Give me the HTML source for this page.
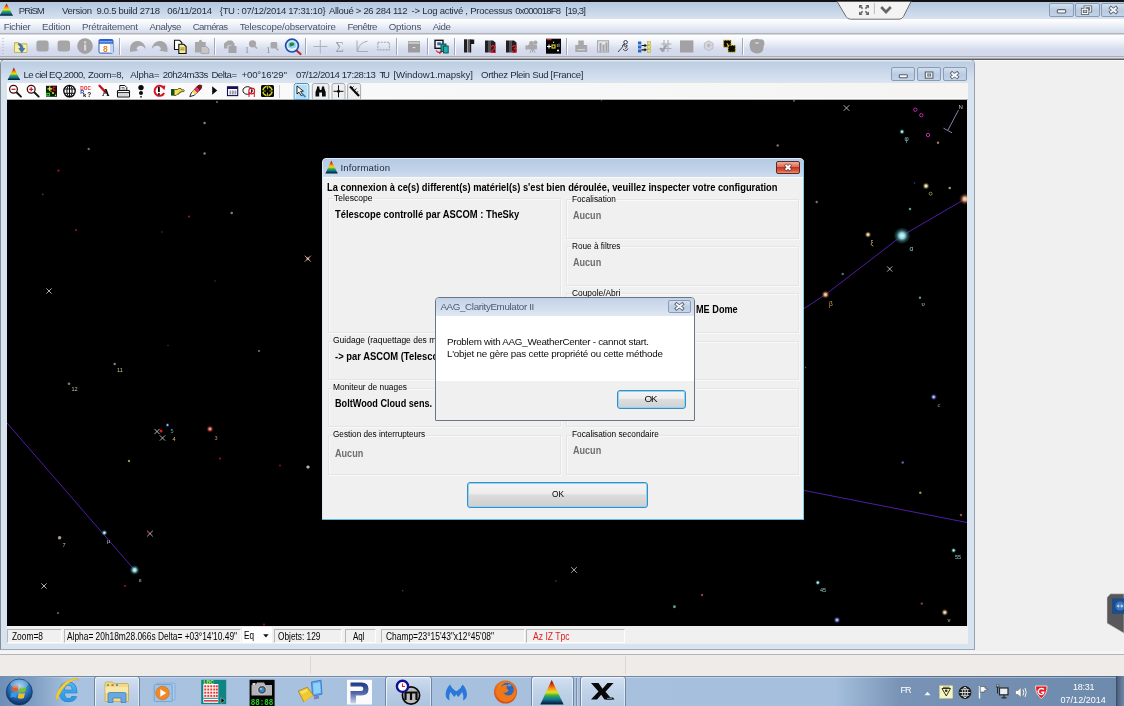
<!DOCTYPE html>
<html><head><meta charset="utf-8"><title>PRiSM</title>
<style>
*{box-sizing:border-box;margin:0;padding:0}
html,body{width:1124px;height:706px;overflow:hidden;background:#f0f0f0;font-family:"Liberation Sans",sans-serif;}
.a{position:absolute}
.t{position:absolute;white-space:pre;line-height:1;font-family:"Liberation Sans",sans-serif;}
svg{position:absolute;overflow:visible;filter:blur(.3px)}
.t{filter:blur(.3px)}
.grp{position:absolute;border:1px solid #e5e5e5;box-shadow:inset 1px 1px 0 #f9f9f9,1px 1px 0 #f9f9f9;z-index:19}
.wb{position:absolute;border:1px solid #8a9bb4;border-radius:2px;background:linear-gradient(#d3dfee,#b9cbe2 55%,#c3d3e7)}
.pan{position:absolute;top:629px;height:14px;border:1px solid #b8b8b8;border-right-color:#fdfdfd;border-bottom-color:#fdfdfd;background:#f0f0f0}
</style></head><body>
<!-- ===== main frame ===== -->
<div class="a" style="left:0;top:0;width:1124px;height:2px;background:#101010"></div>
<div class="a" style="left:0;top:2px;width:1124px;height:17px;background:linear-gradient(#b4c8e1,#c4d4e8 50%,#d8e2ef)"></div>
<div class="a" style="left:0;top:19px;width:1124px;height:14px;background:linear-gradient(#ffffff,#f4f6fb 30%,#d4dcec)"></div>
<div class="a" style="left:0;top:33px;width:1124px;height:1px;background:#b0b4bc"></div>
<div class="a" style="left:0;top:34px;width:1124px;height:1px;background:#d8d8dc"></div>
<div class="a" style="left:0;top:35px;width:1124px;height:21px;background:linear-gradient(#ffffff,#f0f3f9 30%,#d6dcee 68%,#d3d9ec)"></div>
<div class="a" style="left:0;top:56px;width:1124px;height:1px;background:#acaeb6"></div>
<div class="a" style="left:0;top:57px;width:1124px;height:1px;background:#d8d8dc"></div>
<div class="a" style="left:0;top:58px;width:1124px;height:1px;background:#a4a4aa"></div>
<div class="a" style="left:0;top:59px;width:1124px;height:1px;background:#5e5e66"></div>
<div class="a" style="left:0;top:60px;width:1124px;height:1px;background:#fafafa"></div>
<!-- title icon -->
<svg style="left:0;top:2px" width="18" height="17" viewBox="0 0 18 17"><path d="M6.600 1.400 L13 13.800 L-0.500 13.800 Z" fill="url(#rb)"/></svg>
<!-- teamviewer tab -->
<svg style="left:835px;top:0" width="80" height="21" viewBox="0 0 80 21"><path d="M1.8 1 L76.3 1 L68.5 16.5 Q67 19.2 64 19.2 L15.5 19.2 Q12.5 19.2 11 16.5 Z" fill="#f3f3f3" stroke="#6c6c6c" stroke-width="1"/>
<path d="M0 0H80V1.6H0Z" fill="#101010"/>
<g stroke="#666" stroke-width="1.5" fill="none"><path d="M24.6 5.6 L27.6 8.6 M33.4 5.6 L30.4 8.6 M24.6 14.4 L27.6 11.4 M33.4 14.4 L30.4 11.4"/></g>
<g fill="#666"><path d="M24 5h3.6l-3.6 3.6z M34 5v3.6l-3.6-3.6z M24 15v-3.6l3.6 3.6z M34 15h-3.6l3.600-3.600z"/></g>
<path d="M39.4 3 V14" stroke="#bdbdbd" stroke-width="1"/>
<path d="M46.2 7 L51 12 L55.800 7" fill="none" stroke="#666" stroke-width="2.600" stroke-linejoin="miter"/></svg>
<!-- window buttons -->
<div class="wb" style="left:1049px;top:3px;width:25px;height:14px"></div>
<div class="wb" style="left:1075px;top:3px;width:25px;height:14px"></div>
<div class="wb" style="left:1101px;top:3px;width:25px;height:14px"></div>
<svg style="left:1049px;top:3px" width="75" height="14" viewBox="0 0 75 14">
<rect x="8.300" y="6.600" width="8.400" height="3.400" rx="1" fill="#f8f9fb" stroke="#58626f" stroke-width="1.100"/>
<g fill="none" stroke="#58626f" stroke-width="2.800"><path d="M36 7.500V3.800H41.700V8.200H39.500"/><rect x="33.300" y="6.300" width="5.400" height="4.200"/></g>
<g fill="none" stroke="#f8f9fb" stroke-width="1.100"><path d="M36 7.500V3.800H41.700V8.200H39.500"/><rect x="33.300" y="6.300" width="5.400" height="4.200"/></g>
<path d="M60.600 3.800 L68.200 10.200 M68.200 3.800 L60.600 10.200" stroke="#58626f" stroke-width="3.600" stroke-linecap="butt"/><path d="M61.300 4.400 L67.500 9.600 M67.500 4.400 L61.300 9.600" stroke="#f8f9fb" stroke-width="2" stroke-linecap="butt"/>
</svg>
<!-- toolbar -->
<svg style="left:0;top:35px" width="800" height="22" viewBox="0 35 800 22">
<g fill="#aab0c0"><rect x="2.500" y="38" width="1" height="1"/><rect x="2.500" y="41" width="1" height="1"/><rect x="2.500" y="44" width="1" height="1"/><rect x="2.500" y="47" width="1" height="1"/><rect x="2.500" y="50" width="1" height="1"/><rect x="2.500" y="53" width="1" height="1"/></g>
<g stroke="#a2a8b8" stroke-width="1"><path d="M119.500 38V55M214.500 38V55M305.500 38V55M396.500 38V55M427.500 38V55M454.500 38V55M566.500 38V55M742.500 38V55"/></g>
<g stroke="#fafbfd" stroke-width="1"><path d="M120.500 38V55M215.500 38V55M306.500 38V55M397.500 38V55M428.500 38V55M455.500 38V55M567.500 38V55M743.500 38V55"/></g>
<!-- folder -->
<path d="M14.500 42.500h4l1 1.300h7.300v8.700h-12.300z" fill="#f0e080" stroke="#b8a850" stroke-width=".8"/><path d="M15 45h11.500v7h-11.500z" fill="#f8f0a0"/><path d="M18.500 43.500 q4.500 .5 4.500 5 l1.800 0 l-3 4 l-3-4 l1.800 0 q0-2.500-2.100-3.500z" fill="#3a78c8" stroke="#24508c" stroke-width=".5"/>
<!-- grey squares -->
<rect x="36.400" y="40.400" width="12.200" height="11" rx="2.600" fill="#a6a6a8"/><rect x="57.600" y="40.400" width="12.400" height="11" rx="2.600" fill="#a6a6a8"/>
<!-- info -->
<circle cx="85" cy="46.100" r="7.800" fill="#a2a2a4"/><rect x="84" y="44.500" width="2.200" height="6" fill="#d8d8da"/><rect x="84" y="41.300" width="2.200" height="2" fill="#d8d8da"/>
<!-- calendar -->
<rect x="99" y="39.500" width="14" height="13.600" rx="1.200" fill="#fff" stroke="#2858c0" stroke-width="1"/><path d="M99 40.700q0-1.200 1.200-1.200h11.600q1.200 0 1.200 1.200v3h-14z" fill="#2a60d0"/><path d="M99.500 41h13v1.400h-13z" fill="#7aa8f0"/><path d="M110 44h3v9h-3z" fill="#c8d4f0"/><text x="103" y="52" font-family="Liberation Sans" font-weight="700" font-size="8.500" fill="#f08020">8</text>
<!-- undo / redo -->
<path d="M130.200 52 q-1.200-6.500 2.800-9.500 q4-2.600 8.500-.5 q3.500 2 4.300 7 q-2.500-3.300-5.300-3.300 q-3 0-4 3 l1.500 2 z" fill="#a6a6a8"/>
<path d="M167.300 52 q1.200-6.500-2.800-9.500 q-4-2.600-8.500-.5 q-3.500 2-4.300 7 q2.500-3.300 5.300-3.300 q3 0 4 3 l-1.500 2 z" fill="#a6a6a8"/>
<!-- copy -->
<path d="M174.500 40.300h5l2.300 2.300v6.900h-7.300z" fill="#fff" stroke="#111" stroke-width="1.100"/><path d="M178.800 44.300h5l2.300 2.300v6.900h-7.300z" fill="#f4ec90" stroke="#111" stroke-width="1.100"/><path d="M180.300 48h4.200M180.300 49.800h4.200" stroke="#806000" stroke-width=".8"/>
<!-- paste grey -->
<path d="M195 42h3.500q1-2.300 2-2.300t2 2.300h3.200v10.500h-10.700z" fill="#a8a8aa"/><path d="M201 46.500h5.500l2.300 2.300v4.700h-7.800z" fill="#c6c6c8" stroke="#a0a0a2" stroke-width=".8"/>
<!-- grey shapes -->
<path d="M224 43.500l4-3h4l2.500 3v5h-3v-3h-4v3h-3.500z" fill="#a8a8aa"/><rect x="228.500" y="46" width="8" height="7" fill="#a4a4a6"/>
<text x="244.800" y="52.500" font-family="Liberation Serif" font-size="9" fill="#8e8e90">1</text><circle cx="252.500" cy="43.800" r="3.600" fill="#a8a8aa"/><path d="M254.500 46l2.500 2.500" stroke="#a8a8aa" stroke-width="1.600"/>
<text x="266" y="53.300" font-family="Liberation Serif" font-size="9" fill="#8e8e90">1</text><rect x="270.500" y="42" width="6.800" height="6.500" rx="1.500" fill="#a8a8aa"/><path d="M276 48l2.200 2.200" stroke="#a8a8aa" stroke-width="1.600"/>
<!-- globe magnifier -->
<path d="M296.500 50.500l4 3.500" stroke="#c02828" stroke-width="2.200" stroke-linecap="round"/><circle cx="292" cy="45.600" r="6.400" fill="#d8ecfa" stroke="#1c50b0" stroke-width="1.700"/><circle cx="292" cy="45.600" r="4" fill="#9cd0f0"/><path d="M289.500 43.500q2.500-2 5 .2q-.5 2.500-2.800 2.300q-1.200 1.500-2.200-.5z" fill="#208838"/><path d="M288 48.500q4 2 8-.5" stroke="#fff" stroke-width="1" fill="none"/>
<!-- plus sigma curve rect -->
<path d="M313.500 46.500h14M320.300 40v13.500" stroke="#b0b2b8" stroke-width="1"/>
<text x="335.300" y="51.600" font-family="Liberation Serif" font-size="15" fill="#a2a4aa">Σ</text>
<path d="M357 40.500V51.500H368" stroke="#a8aab0" stroke-width="1" fill="none"/><path d="M357.500 51q1.500-8.500 10-9.800" stroke="#a8aab0" stroke-width="1" fill="none"/>
<rect x="377.800" y="42.300" width="11.600" height="7.600" fill="none" stroke="#a4a6ac" stroke-width="1.100" stroke-dasharray="2 1"/>
<!-- grey box -->
<rect x="408" y="41.200" width="12" height="11.300" fill="#9c9c9e"/><rect x="408.500" y="42" width="11" height="2" fill="#c8c8ca"/><rect x="412.600" y="47" width="2.800" height="1.200" fill="#dcdcdc"/>
<!-- colored icon -->
<rect x="435" y="40.300" width="8" height="8" fill="#f0f0f0" stroke="#111" stroke-width="1.400"/><rect x="437.300" y="42.300" width="3.500" height="3" fill="#3060c0"/><path d="M436 50.500q1.500 2.500 5 2l-1-1.500m1 1.500l-1.800 1" stroke="#e02020" stroke-width="1.100" fill="none"/><rect x="441" y="44" width="5" height="7.500" fill="#18a0a0" stroke="#0a4848" stroke-width=".9"/><rect x="443.600" y="46" width="4.600" height="7" fill="#20b0b0" stroke="#0a4848" stroke-width=".9"/>
<!-- cameras -->
<rect x="464" y="39.300" width="3" height="13.200" fill="#202020"/><rect x="467.500" y="39.300" width="2.600" height="13.200" fill="#606060"/><rect x="470" y="39.300" width="1.200" height="13.200" fill="#181818"/><path d="M471 39.500h3.200v4.500h-3.200z" fill="#181818"/>
<rect x="485" y="40.500" width="3" height="12" fill="#202020"/><rect x="488" y="40.500" width="2.600" height="12" fill="#505058"/><path d="M490.500 40.500h2.500l2.500 2v10h-5z" fill="#202020"/><text x="490.300" y="53.200" font-family="Liberation Sans" font-weight="700" font-size="10.500" fill="#e81828">2</text>
<rect x="506" y="40.500" width="3" height="12" fill="#202020"/><rect x="509" y="40.500" width="2.600" height="12" fill="#505058"/><path d="M511.500 40.500h2.500l2.500 2v10h-5z" fill="#202020"/><text x="511.600" y="53.200" font-family="Liberation Sans" font-weight="700" font-size="10.500" fill="#e81828">3</text>
<!-- movie cam grey -->
<circle cx="531.500" cy="43.500" r="2.400" fill="#a8a8aa"/><circle cx="535.500" cy="42.600" r="2" fill="#a8a8aa"/><path d="M528.500 45h8v4h-8zM526 45.500l2.500 1v2l-2.500 1zM532 49l-2.300 4M533 49l2.300 4M532.500 49v3.500" fill="#a8a8aa" stroke="#a8a8aa" stroke-width="1"/>
<!-- sky icon -->
<rect x="546" y="38.700" width="15" height="15" fill="#050505"/><rect x="546.500" y="39" width="5" height="1.300" fill="#e02020"/><path d="M547 46.500h4M549 44.500v4" stroke="#fff" stroke-width="1.100"/><rect x="552" y="45" width="3" height="3" fill="none" stroke="#e8e020" stroke-width="1.100"/><circle cx="558" cy="50.500" r="1" fill="#fff"/><circle cx="553.500" cy="42.300" r=".7" fill="#d0d0ff"/><path d="M557.300 44v3M559 43.500v3.500" stroke="#ccc" stroke-width=".7"/>
<!-- grey save -->
<path d="M575.300 45h3v-4.500h5.500v4.500h3.400v7h-11.900z" fill="#a8a8aa"/><rect x="577.500" y="49" width="7.500" height="1.200" fill="#d0d0d2"/>
<!-- bar chart -->
<rect x="597.600" y="40.800" width="11" height="11.200" fill="#e4e6ec" stroke="#a0a0a4" stroke-width="1"/><rect x="599.500" y="43" width="2" height="8.500" fill="#a0a0a4"/><rect x="602.500" y="44.500" width="2" height="7" fill="#a0a0a4"/><rect x="605.500" y="42.500" width="2" height="9" fill="#a0a0a4"/>
<!-- wrench person -->
<circle cx="625.600" cy="42.300" r="1.800" fill="none" stroke="#30343c" stroke-width="1"/><path d="M618 52l4.500-5q-.5-2.500 2-3.200l-.6 2l1.600 .6l1.500-1.300q.6 2.800-2 3.500" fill="none" stroke="#30343c" stroke-width=".9"/><path d="M623 49q3 3.500 5-.5" fill="none" stroke="#30343c" stroke-width=".9"/>
<!-- blue/yellow squares -->
<g fill="#2468c8"><rect x="638" y="41.500" width="3.300" height="3"/><rect x="638" y="45.500" width="3.300" height="3"/><rect x="638" y="49.500" width="3.300" height="3"/></g><g fill="#e8e068" stroke="#a0a030" stroke-width=".5"><rect x="647.500" y="41.500" width="3.200" height="3"/><rect x="647.500" y="45.500" width="3.200" height="3"/><rect x="647.500" y="49.500" width="3.200" height="3"/></g><path d="M641.500 45.500h4M641.500 49.800h4" stroke="#111" stroke-width="1.200"/><path d="M644.500 43.800l2.500 1.700l-2.500 1.700zM644.500 48.100l2.500 1.700l-2.500 1.700z" fill="#111"/>
<!-- grey hash -->
<path d="M664 40v12M668 40v12M661 44h10.500M661 48.500h10.500" stroke="#aeaeb2" stroke-width="1.100"/><path d="M660 48l2.500 3l4-6" stroke="#9c9ca0" stroke-width="1.800" fill="none"/>
<!-- grey square -->
<rect x="680" y="40.400" width="13.400" height="12.100" fill="#a2a2a4"/>
<!-- light cube -->
<path d="M708.700 40.800l4.300 2.400v5l-4.300 2.500l-4.300-2.500v-5z" fill="#d4d6dc" stroke="#b4b6bc" stroke-width=".8"/><circle cx="708.700" cy="45.600" r="1.800" fill="#b8bac0"/>
<!-- black/yellow -->
<rect x="723.600" y="40.200" width="7.400" height="7" fill="#0a0a0a" stroke="#d8b820" stroke-width="1" stroke-dasharray="1.500 1"/><rect x="728" y="45.200" width="7.400" height="7" fill="#0a0a0a" stroke="#e8d020" stroke-width="1" stroke-dasharray="1.500 1"/><path d="M727 43l1.500 4" stroke="#d8b820" stroke-width="1"/>
<!-- grey head -->
<path d="M750 42q1-3 4-2.600q3-1.500 6 0q3-.600 4 1.600q1 3-.5 5.500q.5 4-2.500 6q-3 1.500-6.500 .5q-4-1-4.500-5q-1-3 0-6z" fill="#a2a2a4"/><ellipse cx="757" cy="43" rx="2" ry="1" fill="#d0d0d2"/>
</svg>

<!-- ===== MDI child ===== -->
<div class="a" style="left:0;top:59px;width:975px;height:591px;background:#d8e3f0;border:1px solid #858d98;border-top-color:#5e5e66;border-bottom-color:#a2aab4;border-right-color:#98a0ac;border-radius:5px 5px 0 0"></div>
<div class="a" style="left:1px;top:60px;width:973px;height:23px;border-radius:4px 4px 0 0;background:linear-gradient(#dce7f1 0,#dce7f1 1px,#bccee3 2px,#cbd9ea 55%,#dbe5f0)"></div>
<div class="a" style="left:7px;top:83px;width:961px;height:16px;background:linear-gradient(90deg,#fcfcfc,#f8f8f8 40%,#f5f4f3)"></div>
<div class="a" style="left:7px;top:98px;width:961px;height:1px;background:#fdfdfd"></div><div class="a" style="left:7px;top:99px;width:961px;height:1px;background:#b0b0b0"></div>
<div class="a" style="left:7px;top:100px;width:960px;height:526px;background:#000;overflow:hidden">
<svg style="left:-7px;top:-100px" width="1124" height="706" viewBox="0 0 1124 706"><defs>
<radialGradient id="gc"><stop offset="0" stop-color="#d8ffff"/><stop offset=".35" stop-color="#8fd0d8"/><stop offset=".7" stop-color="#3a8088" stop-opacity=".45"/><stop offset="1" stop-color="#3a8088" stop-opacity="0"/></radialGradient>
<radialGradient id="go"><stop offset="0" stop-color="#ffe8d0"/><stop offset=".35" stop-color="#e0a078"/><stop offset=".7" stop-color="#805038" stop-opacity=".45"/><stop offset="1" stop-color="#805038" stop-opacity="0"/></radialGradient>
<radialGradient id="gy"><stop offset="0" stop-color="#fff4d8"/><stop offset=".35" stop-color="#d8b888"/><stop offset=".7" stop-color="#806848" stop-opacity=".45"/><stop offset="1" stop-color="#806848" stop-opacity="0"/></radialGradient>
<radialGradient id="gw"><stop offset="0" stop-color="#ffffe8"/><stop offset=".35" stop-color="#d8d0a0"/><stop offset=".7" stop-color="#807850" stop-opacity=".45"/><stop offset="1" stop-color="#807850" stop-opacity="0"/></radialGradient>
<radialGradient id="gr"><stop offset="0" stop-color="#ffd0c8"/><stop offset=".35" stop-color="#d06050"/><stop offset=".7" stop-color="#802820" stop-opacity=".45"/><stop offset="1" stop-color="#802820" stop-opacity="0"/></radialGradient>
<radialGradient id="gb"><stop offset="0" stop-color="#e0e8ff"/><stop offset=".35" stop-color="#8090d8"/><stop offset=".7" stop-color="#384088" stop-opacity=".45"/><stop offset="1" stop-color="#384088" stop-opacity="0"/></radialGradient>
</defs>
<g stroke="#5c1fb8" stroke-width=".9" fill="none"><path d="M7 423 L134.600 570"/><path d="M965 199 L902 235.700 L825.500 294.600 L804 308.500"/><path d="M804 490.400 L967 522.500"/></g>
<g stroke="#a4a4d4" stroke-width=".8" fill="none"><path d="M958.500 110 L948 130"/><path d="M943.500 128.200 L952 132.800"/></g>
<g stroke="#c42cbc" stroke-width=".95" fill="none"><circle cx="915.300" cy="109.700" r="1.700"/><circle cx="921.300" cy="115.200" r="1.700"/><circle cx="928" cy="135" r="1.700"/></g>
<circle cx="902" cy="235.7" r="8.5" fill="url(#gc)"/>
<circle cx="965" cy="199" r="6" fill="url(#go)"/>
<circle cx="825.5" cy="294.6" r="4.2" fill="url(#go)"/>
<circle cx="868" cy="234.6" r="3.4" fill="url(#gy)"/>
<circle cx="926" cy="186" r="3.6" fill="url(#gw)"/>
<circle cx="902" cy="131.7" r="2.8" fill="url(#gc)"/>
<circle cx="134.6" cy="570" r="5" fill="url(#gc)"/>
<circle cx="104.4" cy="532.8" r="3" fill="url(#gc)"/>
<circle cx="210" cy="429" r="3.8" fill="url(#gr)"/>
<circle cx="167.5" cy="425" r="2.2" fill="url(#gb)"/>
<circle cx="933.7" cy="397" r="3.4" fill="url(#gb)"/>
<circle cx="837" cy="620" r="3.6" fill="url(#gb)"/>
<circle cx="944.8" cy="612.4" r="3.6" fill="url(#gy)"/>
<circle cx="953.6" cy="550.4" r="2.6" fill="url(#gc)"/>
<circle cx="817.8" cy="582.6" r="2.6" fill="url(#gc)"/>
<circle cx="307.8" cy="258.7" r="2.5" fill="url(#gr)"/>
<circle cx="217" cy="102" r="0.96" fill="#888" opacity=".85"/>
<circle cx="204.6" cy="123" r="1.2" fill="#999" opacity=".85"/>
<circle cx="204.6" cy="153.5" r="1.2" fill="#999" opacity=".85"/>
<circle cx="88.7" cy="149" r="1.2" fill="#a07078" opacity=".85"/>
<circle cx="58.5" cy="170.7" r="1.12" fill="#c01818" opacity=".85"/>
<circle cx="42.8" cy="194.4" r="0.8" fill="#555" opacity=".85"/>
<circle cx="189" cy="216.6" r="1.12" fill="#c01818" opacity=".85"/>
<circle cx="231.7" cy="213" r="1.28" fill="#a09090" opacity=".85"/>
<circle cx="76" cy="230" r="1.12" fill="#c01818" opacity=".85"/>
<circle cx="161.8" cy="232" r="0.8" fill="#444" opacity=".85"/>
<circle cx="215" cy="281" r="0.8" fill="#444" opacity=".85"/>
<circle cx="168" cy="345.5" r="0.8" fill="#444" opacity=".85"/>
<circle cx="259" cy="351" r="1.12" fill="#888" opacity=".85"/>
<circle cx="114.7" cy="364" r="1.2" fill="#999" opacity=".85"/>
<circle cx="69" cy="383.7" r="1.28" fill="#a09080" opacity=".85"/>
<circle cx="129" cy="461" r="1.2" fill="#b0a870" opacity=".85"/>
<circle cx="220" cy="458.6" r="1.04" fill="#c01818" opacity=".85"/>
<circle cx="280" cy="465.5" r="1.04" fill="#a01818" opacity=".85"/>
<circle cx="59.6" cy="537.8" r="1.76" fill="#d0b8a0" opacity=".85"/>
<circle cx="125" cy="586" r="1.04" fill="#c01818" opacity=".85"/>
<circle cx="58" cy="613" r="1.12" fill="#807868" opacity=".85"/>
<circle cx="264" cy="624.5" r="1.04" fill="#c01818" opacity=".85"/>
<circle cx="402.8" cy="590.7" r="0.8" fill="#555" opacity=".85"/>
<circle cx="555.8" cy="581" r="0.8" fill="#555" opacity=".85"/>
<circle cx="794" cy="100.7" r="1.04" fill="#777" opacity=".85"/>
<circle cx="938" cy="142.8" r="1.2" fill="#b09860" opacity=".85"/>
<circle cx="777.7" cy="145.5" r="1.2" fill="#a08868" opacity=".85"/>
<circle cx="949.7" cy="188" r="1.28" fill="#c0b070" opacity=".85"/>
<circle cx="914.6" cy="183" r="0.8" fill="#4050a0" opacity=".85"/>
<circle cx="816.7" cy="202" r="1.2" fill="#a08070" opacity=".85"/>
<circle cx="910" cy="209" r="1.28" fill="#70b0b0" opacity=".85"/>
<circle cx="842.7" cy="274" r="1.28" fill="#6080a0" opacity=".85"/>
<circle cx="920" cy="297.7" r="1.2" fill="#70b0b0" opacity=".85"/>
<circle cx="805.6" cy="367.6" r="0.8" fill="#665" opacity=".85"/>
<circle cx="902.7" cy="462.5" r="1.28" fill="#7868b0" opacity=".85"/>
<circle cx="920.3" cy="492.7" r="1.28" fill="#b8a860" opacity=".85"/>
<circle cx="961" cy="515" r="1.28" fill="#a06050" opacity=".85"/>
<circle cx="702" cy="595" r="1.2" fill="#a05048" opacity=".85"/>
<circle cx="674.4" cy="606.7" r="1.44" fill="#70b8b0" opacity=".85"/>
<circle cx="921.8" cy="603.6" r="1.2" fill="#a05048" opacity=".85"/>
<circle cx="601.5" cy="100.6" r="0.8" fill="#a02020" opacity=".85"/>
<g stroke="#d8d8d8" stroke-width=".8">
<path d="M46.4 288.4L51.6 293.6M51.6 288.4L46.4 293.6"/>
<path d="M154.4 428.9L159.6 434.1M159.6 428.9L154.4 434.1"/>
<path d="M159.9 435.4L165.1 440.6M165.1 435.4L159.9 440.6"/>
<path d="M147.2 530.8L152.8 536.4M152.8 530.8L147.2 536.4"/>
<path d="M41.4 583.4L46.6 588.6M46.6 583.4L41.4 588.6"/>
<path d="M843.7 105.2L849.3 110.8M849.3 105.2L843.7 110.8"/>
<path d="M887.1 266.4L892.3 271.6M892.3 266.4L887.1 271.6"/>
<path d="M571.2 567.1L576.8 572.7M576.8 567.1L571.2 572.7"/>
<path d="M304.8 255.7L310.8 261.7M310.8 255.7L304.8 261.7"/>
</g>
<circle cx="308" cy="467" r="1.600" fill="#ddd"/><circle cx="308" cy="467" r=".6" fill="#222"/>
<circle cx="930.600" cy="193.700" r="1.500" fill="none" stroke="#c0b070" stroke-width=".7"/>
<circle cx="161" cy="431" r="1.500" fill="#e01818"/><circle cx="148.500" cy="532.500" r="1" fill="#c01818"/>
<text x="117" y="371.5" font-family="Liberation Sans" font-size="5.5" fill="#c8c0a0">11</text>
<text x="71.5" y="391" font-family="Liberation Sans" font-size="5.5" fill="#c8c0a0">12</text>
<text x="170.5" y="433" font-family="Liberation Sans" font-size="5.5" fill="#60a0c0">5</text>
<text x="172.5" y="440.5" font-family="Liberation Sans" font-size="5.5" fill="#d0c060">4</text>
<text x="214.5" y="439.5" font-family="Liberation Sans" font-size="5.5" fill="#c09060">3</text>
<text x="62.5" y="546.5" font-family="Liberation Sans" font-size="5.5" fill="#c0b8a0">7</text>
<text x="107" y="543" font-family="Liberation Sans" font-size="6" fill="#a0c8c8">μ</text>
<text x="139" y="582" font-family="Liberation Sans" font-size="6" fill="#a0c8c8">ε</text>
<text x="904.5" y="141" font-family="Liberation Sans" font-size="6.5" fill="#80c0c0">φ</text>
<text x="870.5" y="244.5" font-family="Liberation Sans" font-size="6.5" fill="#d0b880">ξ</text>
<text x="909.5" y="250.5" font-family="Liberation Sans" font-size="6.5" fill="#a0c8c8">α</text>
<text x="829" y="305.5" font-family="Liberation Sans" font-size="6.5" fill="#d0a060">β</text>
<text x="921.5" y="306" font-family="Liberation Sans" font-size="6" fill="#a0c8c8">υ</text>
<text x="937.5" y="406.5" font-family="Liberation Sans" font-size="6" fill="#8090c0">c</text>
<text x="955" y="559" font-family="Liberation Sans" font-size="5.5" fill="#a0c8c8">55</text>
<text x="820" y="591.5" font-family="Liberation Sans" font-size="5.5" fill="#a0c8c8">45</text>
<text x="947.5" y="622" font-family="Liberation Sans" font-size="6" fill="#d0c880">ν</text>
<text x="958.5" y="109" font-family="Liberation Sans" font-size="6" fill="#c8c8e0">N</text>
</svg>
</div>
<div class="a" style="left:7px;top:626px;width:961px;height:18px;background:#f0f0f0"></div>
<!-- child title icon -->
<svg style="left:7px;top:67px" width="14" height="14" viewBox="0 0 14 14"><path d="M6.800 0.600 L13.200 13 L0.600 13 Z" fill="url(#rb)"/></svg>
<!-- child window buttons -->
<div class="wb" style="left:891px;top:67px;width:24px;height:14px"></div>
<div class="wb" style="left:917px;top:67px;width:24px;height:14px"></div>
<div class="wb" style="left:943px;top:67px;width:24px;height:14px"></div>
<svg style="left:891px;top:67.700px" width="76" height="14" viewBox="0 0 76 14">
<rect x="8.300" y="6.700" width="8" height="3" rx=".8" fill="#f8f9fb" stroke="#58626f" stroke-width="1.100"/>
<rect x="34.300" y="4" width="7.600" height="6.200" fill="#f8f9fb" stroke="#58626f" stroke-width="1.100"/><rect x="36.800" y="6" width="2.800" height="2" fill="none" stroke="#58626f" stroke-width="1"/>
<path d="M59.800 4.200 L67.400 10.200 M67.400 4.200 L59.800 10.200" stroke="#58626f" stroke-width="3.600" stroke-linecap="butt"/><path d="M60.500 4.800 L66.700 9.600 M66.700 4.800 L60.500 9.600" stroke="#f8f9fb" stroke-width="2" stroke-linecap="butt"/>
</svg>
<!-- child toolbar -->
<svg style="left:0;top:83px" width="400" height="17" viewBox="0 83 400 17">
<!-- zoom out / in -->
<g fill="none"><path d="M16.500 92.300l4.500 4.300" stroke="#111" stroke-width="1.900" stroke-linecap="round"/><circle cx="13.500" cy="89.300" r="3.900" fill="#fff" stroke="#3a1010" stroke-width="1.300"/><path d="M11.500 89.300h4" stroke="#e01020" stroke-width="1.300"/>
<path d="M34.200 92.300l4.500 4.300" stroke="#111" stroke-width="1.900" stroke-linecap="round"/><circle cx="31.200" cy="89.300" r="3.900" fill="#fff" stroke="#3a1010" stroke-width="1.300"/><path d="M29.200 89.300h4M31.200 87.300v4" stroke="#e01020" stroke-width="1.300"/></g>
<!-- sky icon -->
<rect x="46" y="85.800" width="11" height="11" fill="#062008"/><rect x="51" y="85.800" width="6" height="6" fill="#200808"/><path d="M47.500 88.800h4.500M49.700 86.600v4.500" stroke="#f0f040" stroke-width="1.200"/><path d="M55.500 87.200q-2.500-.8-2.500 1.500q0 2 2.500 1.300" stroke="#e02020" stroke-width="1.100" fill="none"/><rect x="46.800" y="93.300" width="2.600" height="2.600" fill="none" stroke="#40e040" stroke-width="1"/><circle cx="53" cy="93" r="1" fill="#f0e040"/><circle cx="55.500" cy="95.300" r=".7" fill="#f0f0a0"/><circle cx="51" cy="91.300" r=".6" fill="#f0e040"/>
<!-- globe -->
<circle cx="69.500" cy="91.100" r="5.700" fill="#fff" stroke="#0a0a0a" stroke-width="1.400"/><ellipse cx="69.500" cy="91.100" rx="2.600" ry="5.700" fill="none" stroke="#0a0a0a" stroke-width="1"/><path d="M69.500 85.400v11.400M64 89h11M64.300 93.300h10.400" stroke="#0a0a0a" stroke-width="1"/>
<!-- DOC Rk? -->
<text x="80.300" y="89.600" font-family="Liberation Sans" font-weight="700" font-size="5.600" fill="#e02030" textLength="10.500" lengthAdjust="spacingAndGlyphs">DOC</text><text x="80.300" y="94" font-family="Liberation Sans" font-weight="700" font-size="5.500" fill="#2040a0">R</text><text x="83" y="97" font-family="Liberation Sans" font-weight="700" font-size="6" fill="#101030">k</text><text x="87.200" y="96.800" font-family="Liberation Sans" font-weight="700" font-size="6.500" fill="#101010">?</text>
<!-- A with pen -->
<text x="102" y="95.800" font-family="Liberation Serif" font-weight="700" font-size="10.500" fill="#080808">A</text><path d="M99.500 85.800l5.500 5.800" stroke="#c81020" stroke-width="2.300" stroke-linecap="round"/><path d="M104.500 91l1.300 1.600" stroke="#401010" stroke-width="1.200"/>
<!-- printer -->
<path d="M119.800 90.500v-5h5l2 2v3" fill="#fff" stroke="#111" stroke-width="1"/><path d="M121.500 87.500h3M121.500 89h4" stroke="#555" stroke-width=".8"/><rect x="117.500" y="90.500" width="12" height="6.500" rx=".8" fill="#fff" stroke="#111" stroke-width="1.100"/><path d="M117.500 92.700h12" stroke="#111" stroke-width="1"/><rect x="118.600" y="94.300" width="9.800" height="1.400" fill="#c8c8c8"/>
<!-- dots -->
<circle cx="141" cy="87.600" r="2.700" fill="#0a0a0a"/><circle cx="141" cy="93" r="2" fill="#0a0a0a"/><circle cx="141" cy="96.800" r=".9" fill="#0a0a0a"/>
<!-- red circle arrow -->
<path d="M163.300 87.500a5 5 0 1 0 .8 5.500" fill="none" stroke="#e01020" stroke-width="2"/><path d="M160.500 86.300l4.800-.8l-.8 4.800z" fill="#e01020"/><rect x="158" y="87" width="1.800" height="5" fill="#0a0a0a"/><rect x="158" y="93.200" width="1.800" height="1.700" fill="#0a0a0a"/>
<!-- hand -->
<rect x="171" y="89" width="3.200" height="6.600" fill="#105020"/><path d="M174.200 89.500h3.500l.8-1h2.500l.5 1.300h2.300q1 .9 0 1.800h-3l.3 .7h-1.500v1h-1v1h-1.500l-1 1.200h-2z" fill="#f0e050" stroke="#303000" stroke-width=".7"/>
<!-- crayon -->
<path d="M189.800 96.600l1.500-3.800l6.500-7q2-1.300 3.800-.3q.5 1.800-1 3.800l-6.500 6z" fill="#fff" stroke="#1a0808" stroke-width=".9"/><path d="M196.300 87.300l1.500-1.500q2-1.300 3.800-.3q.5 1.800-1 3.800l-1.300 1.200z" fill="#7a1010"/><path d="M194 89.800l2.300-2.500l3 3.200l-2.400 2.200z" fill="#f02080"/><path d="M192.200 91.800l1.800-2l2.900 2.900l-2 1.800z" fill="#f0e040"/>
<!-- play -->
<path d="M212.200 86.200l5 4.300l-5 4.300z" fill="#080808"/>
<!-- window icon -->
<rect x="227.500" y="86.800" width="10.200" height="8.800" fill="#fff" stroke="#101058" stroke-width="1.100"/><rect x="227.500" y="86.800" width="10.200" height="2.200" fill="#101058"/><rect x="229.500" y="90.500" width="1.800" height="4" fill="#9898a8"/><rect x="232" y="90.500" width="1.800" height="4" fill="#9898a8"/><rect x="234.500" y="90.500" width="1.800" height="4" fill="#9898a8"/>
<!-- ellipse + red -->
<ellipse cx="247.500" cy="90.500" rx="4.600" ry="3.800" fill="none" stroke="#111" stroke-width="1"/><circle cx="251.700" cy="91" r="2.900" fill="none" stroke="#e01020" stroke-width="1.100"/><circle cx="251.700" cy="91" r=".9" fill="#301010"/><path d="M249 92v5M254.300 92v5" stroke="#e01020" stroke-width="1"/>
<!-- target icon -->
<rect x="261" y="85" width="13" height="12" rx="1.500" fill="#0a0a04"/><circle cx="267.500" cy="91" r="4.600" fill="none" stroke="#d8d830" stroke-width="1.600"/><path d="M267.500 85.500v11M262 91h11" stroke="#0a0a04" stroke-width="2"/><path d="M267.500 86v3.300M267.500 92.700v3.300M262.800 91h3M269.500 91h3" stroke="#d8d830" stroke-width=".8"/>
<path d="M279.500 85v13" stroke="#c8c8d0" stroke-width="1"/>
<!-- buttons -->
<path d="M294.200 99.500v-14q0-2 2-2h10.600q2 0 2 2v14z" fill="#b4def4" stroke="#4a92bc" stroke-width="1"/><path d="M295.200 99v-13.500q0-1 1-1h10.600q1 0 1 1v13.500" fill="none" stroke="#def2fc" stroke-width="1"/>
<path d="M312.300 99.500v-14q0-2 2-2h12.600q2 0 2 2v14z" fill="#efefef" stroke="#a4acb4" stroke-width="1"/>
<path d="M332 99.500v-14q0-2 2-2h9q2 0 2 2v14z" fill="#efefef" stroke="#a4acb4" stroke-width="1"/>
<path d="M347.600 99.500v-14q0-2 2-2h9q2 0 2 2v14z" fill="#efefef" stroke="#a4acb4" stroke-width="1"/>
<path d="M297 86l0 8l2-1.800l2.300 3.600l1.500-.9l-2.200-3.500l2.800-.3z" fill="#fff" stroke="#111" stroke-width=".9" stroke-linejoin="round"/><path d="M302 93.500l3.300 3.500" stroke="#3878b8" stroke-width="1.600"/>
<path d="M315.500 96.500v-4.500l1.500-4v-1.500h2.300v1.500l.7 2h1.200l.7-2v-1.500h2.300v1.500l1.500 4v4.500h-3.700v-4h-2.800v4z" fill="#0a0a0a"/>
<path d="M333.500 91.300h10M338.500 85.300v12" stroke="#0a0a0a" stroke-width="1"/><circle cx="338.500" cy="91.300" r="1.500" fill="#0a0a0a"/>
<path d="M350 86.500l9 9.500" stroke="#0a0a0a" stroke-width="2.200"/><path d="M351.500 88.500l2-2M353.800 91l2.600-2.600M356 93.300l2-2" stroke="#0a0a0a" stroke-width=".9"/>
</svg>
<!-- child status panels -->
<div class="pan" style="left:7px;width:55px"></div>
<div class="pan" style="left:64px;width:177px"></div>
<div class="a" style="left:242px;top:627px;width:30px;height:16px;background:#fff"></div>
<svg style="left:263px;top:634px" width="6" height="4"><path d="M0.200 .3h5.400l-2.700 3.200z" fill="#111"/></svg>
<div class="pan" style="left:274px;width:68px"></div>
<div class="pan" style="left:345px;width:31px"></div>
<div class="pan" style="left:381px;width:144px"></div>
<div class="pan" style="left:526px;width:99px"></div>

<!-- ===== main status + taskbar ===== -->
<div class="a" style="left:0;top:651px;width:1124px;height:3px;background:#f5f5f5"></div>
<div class="a" style="left:0;top:654px;width:1124px;height:1px;background:#b4b4b4"></div>
<div class="a" style="left:0;top:655px;width:1124px;height:21px;background:#efebe8"></div>
<div class="a" style="left:310px;top:656px;width:1px;height:18px;background:#dcd8d6"></div>
<div class="a" style="left:625px;top:656px;width:1px;height:18px;background:#dcd8d6"></div>
<div class="a" style="left:0;top:676px;width:1124px;height:30px;background:linear-gradient(90deg,#a8c2df 0px,#a5bfdd 835px,#7893b5 900px,#6d89ab 1124px)"></div>
<div class="a" style="left:0;top:676px;width:1124px;height:1px;background:rgba(70,90,120,.55)"></div>
<div class="a" style="left:0;top:677px;width:1124px;height:1px;background:rgba(255,255,255,.35)"></div>
<!-- darker left area around orb -->
<div class="a" style="left:0;top:676px;width:70px;height:30px;background:linear-gradient(90deg,#6f8fb6,#7d9cc1 45%,rgba(168,193,222,0))"></div>
<!-- highlighted buttons -->
<div class="a" style="left:93.500px;top:676px;width:46px;height:31px;border:1px solid #7286a2;border-radius:3px 3px 0 0;background:linear-gradient(#d4e1f0,#bfd2e8 50%,#b4c9e2);box-shadow:inset 1px 1px 0 rgba(255,255,255,.7),inset -1px 0 0 rgba(255,255,255,.5)"></div>
<div class="a" style="left:384.500px;top:676px;width:47px;height:31px;border:1px solid #7286a2;border-radius:3px 3px 0 0;background:linear-gradient(#cfddee,#b9cde5 50%,#aec4df);box-shadow:inset 1px 1px 0 rgba(255,255,255,.7),inset -1px 0 0 rgba(255,255,255,.5)"></div>
<div class="a" style="left:530.500px;top:676px;width:43px;height:31px;border:1px solid #7286a2;border-radius:3px 3px 0 0;background:linear-gradient(#d4e1f0,#bfd2e8 50%,#b4c9e2);box-shadow:inset 1px 1px 0 rgba(255,255,255,.7),inset -1px 0 0 rgba(255,255,255,.5)"></div>
<div class="a" style="left:575.500px;top:678px;width:2px;height:28px;background:#bccee4;border-left:1px solid #7c8fab"></div>
<div class="a" style="left:579.500px;top:676px;width:46px;height:31px;border:1px solid #7286a2;border-radius:3px 3px 0 0;background:linear-gradient(#d4e1f0,#bfd2e8 50%,#b4c9e2);box-shadow:inset 1px 1px 0 rgba(255,255,255,.7),inset -1px 0 0 rgba(255,255,255,.5)"></div>
<!-- show desktop -->
<div class="a" style="left:1116px;top:676px;width:8px;height:30px;background:linear-gradient(90deg,#4a5f7c,#7088a8);border-left:1px solid #3c4e68"></div>
<svg style="left:0;top:676px" width="1124" height="30" viewBox="0 676 1124 30">
<defs>
<radialGradient id="orb" cx=".5" cy=".3" r=".75"><stop offset="0" stop-color="#8fd0f4"/><stop offset=".45" stop-color="#2a7cc8"/><stop offset=".8" stop-color="#12407c"/><stop offset="1" stop-color="#0a2850"/></radialGradient>
<linearGradient id="pg" x1="0" y1="0" x2="0" y2="1"><stop offset="0" stop-color="#1c3a88"/><stop offset=".5" stop-color="#5068a8"/><stop offset="1" stop-color="#d0d6e8"/></linearGradient>
<radialGradient id="ff" cx=".5" cy=".4" r=".6"><stop offset="0" stop-color="#ffd040"/><stop offset=".5" stop-color="#f08020"/><stop offset="1" stop-color="#d84810"/></radialGradient>
</defs>
<!-- start orb -->
<circle cx="19.300" cy="692" r="13" fill="url(#orb)" stroke="#183860" stroke-width=".8"/>
<path d="M12.500 686.500q3-1.800 6 0l-1 5q-3-1.500-6 0z" fill="#e85820"/><path d="M20 686.800q3 1.800 6.200 0l-1 5q-3 1.600-6.200 0z" fill="#80c030"/><path d="M11.200 692.800q3-1.600 6 0l-1 5q-3-1.500-6 0z" fill="#3898e0"/><path d="M18.700 693q3 1.600 6.200 0l-1 5q-3 1.600-6.200 0z" fill="#f0c020"/>
<ellipse cx="19.300" cy="684" rx="9" ry="4.500" fill="#fff" opacity=".25"/>
<!-- IE -->
<defs><linearGradient id="ieg" x1="0" y1="0" x2="0" y2="1"><stop offset="0" stop-color="#7ad0fa"/><stop offset=".5" stop-color="#3aa8ec"/><stop offset="1" stop-color="#2486d4"/></linearGradient></defs>
<text x="57.800" y="702.300" font-family="Liberation Sans" font-weight="700" font-size="37" fill="url(#ieg)" stroke="#1f7cc8" stroke-width=".5">e</text>
<path d="M57.300 700.500q-3.200-3.200 1.500-11q5-8 13-10.500q6-1.600 7.200 1.400q-1.200-1.600-5.700 0q-7 3-11.500 10q-4 6.500-4.500 10.100z" fill="#f6cc34" stroke="#d8a818" stroke-width=".4"/>
<!-- folder -->
<path d="M105 683.500q0-1.500 1.500-1.500h6l1.500 1.500h13q1.500 0 1.500 1.500v16.500h-23.500z" fill="#f2d98a" stroke="#c8a850" stroke-width=".8"/><rect x="107" y="684.300" width="2" height="1.500" fill="#40a040"/><rect x="111.500" y="684.300" width="2" height="1.500" fill="#d04030"/><rect x="116" y="684.300" width="2" height="1.500" fill="#3880c8"/><path d="M105.500 687h22.500v6h-22.500z" fill="#f8e8a8"/><path d="M108 702.500v-8.500q0-1.500 1.500-1.500h15q1.500 0 1.500 1.500v8.500h-5v-4.500h-8v4.500z" fill="#6aa8e0" stroke="#3878b8" stroke-width=".7"/>
<!-- media player -->
<rect x="156.500" y="683.200" width="18.500" height="17" rx="1.500" fill="#a8ccec" stroke="#7aa8d4" stroke-width=".8" opacity=".9"/><rect x="154.200" y="684.500" width="18" height="17" rx="1.500" fill="#9cc4e8" stroke="#6c9ccc" stroke-width=".8"/><circle cx="162.500" cy="693" r="6.800" fill="#f08828" stroke="#d86810" stroke-width=".6"/><path d="M160.300 689.300l6 3.700l-6 3.700z" fill="#fff"/>
<!-- grid icon -->
<rect x="201.200" y="679.800" width="25" height="24.300" fill="#0e8484"/><rect x="203.300" y="684" width="15" height="18.800" fill="#fff"/><g fill="#e83838"><rect x="204.300" y="685.300" width="2" height="2"/><rect x="207.300" y="685.300" width="2" height="2"/><rect x="210.300" y="685.300" width="2" height="2"/><rect x="213.300" y="685.300" width="2" height="2"/><rect x="216" y="685.300" width="1.800" height="2"/>
<rect x="204.300" y="688.500" width="2" height="2"/><rect x="207.300" y="688.500" width="2" height="2"/><rect x="210.300" y="688.500" width="2" height="2"/><rect x="213.300" y="688.500" width="2" height="2"/><rect x="216" y="688.500" width="1.800" height="2"/>
<rect x="204.300" y="691.700" width="2" height="2"/><rect x="207.300" y="691.700" width="2" height="2"/><rect x="210.300" y="691.700" width="2" height="2"/><rect x="213.300" y="691.700" width="2" height="2"/><rect x="216" y="691.700" width="1.800" height="2"/>
<rect x="204.300" y="694.900" width="2" height="2"/><rect x="207.300" y="694.900" width="2" height="2"/><rect x="210.300" y="694.900" width="2" height="2"/><rect x="213.300" y="694.900" width="2" height="2"/><rect x="216" y="694.900" width="1.800" height="2"/>
<rect x="204" y="700" width="14" height="1.600" /></g><path d="M203.300 698.300h15" stroke="#0e8484" stroke-width="1"/>
<text x="203.500" y="683.600" font-family="Liberation Sans" font-weight="700" font-size="5" fill="#b8f040">LBC</text><path d="M221 697.500l4 3l-4 3z" fill="#101010" stroke="#d0d0d0" stroke-width=".5"/>
<!-- camera icon -->
<rect x="249.600" y="679.800" width="25" height="26.200" fill="#050505"/><path d="M251.500 685h4l1.500-2.500h7l1.500 2.500h6.500v10.500h-20.500z" fill="#b4b4b8"/><rect x="252.500" y="683" width="3" height="2" fill="#d8d8d8"/><circle cx="262" cy="689.800" r="4.300" fill="#484850" stroke="#e0e0e0" stroke-width=".8"/><circle cx="262" cy="689.800" r="2.500" fill="#3888c8"/><circle cx="261" cy="688.800" r=".9" fill="#c0e0f8"/>
<text x="250.800" y="705.300" font-family="Liberation Mono" font-weight="700" font-size="9.500" fill="#20d020" textLength="22.500" lengthAdjust="spacingAndGlyphs">88:88</text>
<!-- phone + monitor -->
<path d="M311.500 682l9.500-1.800l1 14l-9.500 2z" fill="#58a8f0" stroke="#2868b8" stroke-width=".7"/><path d="M313 683.500l7-1.300l.7 10.500l-7 1.400z" fill="#90d0fc"/><path d="M314 696.500l5-1v3l-5 1z" fill="#8080c0"/>
<path d="M298.300 691l9-3.800l6.200 8.300l-9.500 6.800z" fill="#f0c830" stroke="#a07810" stroke-width=".7"/><path d="M300 692l6.500-2.800l1.500 2l-6.500 3z" fill="#f8e070"/><path d="M303.500 702.300l9.800-6.800v1.500l-9.500 6.500z" fill="#c0c0d0"/>
<!-- P icon -->
<rect x="347" y="679.800" width="25" height="24.700" fill="#fbfbfd"/><path d="M350.500 682.500h11q7 0 7 6.500q0 6.500-7 6.500h-5.500v8h-5.500v-12.500h10.500q2.300 0 2.300-2.200q0-2.300-2.300-2.300h-10.500z" fill="url(#pg)"/>
<!-- clock m icon -->
<circle cx="411" cy="695.500" r="8.600" fill="#bcbcbc" stroke="#0a0a0a" stroke-width="1.700"/><path d="M405.500 700v-7.500h11v7.500M411 692.500v7.500" stroke="#0a0a0a" stroke-width="2.200" fill="none"/><circle cx="402.500" cy="686.300" r="5.600" fill="#fff" stroke="#101090" stroke-width="2.400"/><path d="M402.500 683.500v3h2.500" stroke="#e02020" stroke-width="1.100" fill="none"/>
<!-- malwarebytes -->
<path d="M446 697q-1.500-7 4-12.500q1.500 3.500 5 6q1.300 1 2.600 0q3.500-2.500 5-6q5.500 5.500 4 12.500q-1 2.500-3.500 3.500q1-4.500-.8-8.500l-4 5l-2-2.500l-2 2.500l-4-5q-1.800 4-.8 8.500q-2.500-1-3.500-3.500z" fill="#2a78dc"/>
<!-- firefox -->
<circle cx="505.500" cy="692" r="11.500" fill="url(#ff)"/><circle cx="507" cy="689.500" r="6.800" fill="#2868c0"/><path d="M502 686q3-2 6-1q-2 1.500-1.500 3.500q2 .5 2 2.500q-2 2.500-5.500 1.500q3 4 8 2.500q4-2 4.500-6.500q1.500 5-1.500 9.500q-4 4.500-10 3.500q-7-2-8-9q0-4 2-7q0 2 1 3q1-2 3-2z" fill="#f07818"/><path d="M508 684q2.500 0 4 2q-2-.5-3.500 .5z" fill="#60b0f0"/>
<!-- prism -->
<path d="M551.700 680 L563.700 704.500 L540.300 704.500 Z" fill="url(#rb)"/>
<!-- X -->
<path d="M591 683h7.500l4 5.800l5-5.800h6l-8 8.800l6.500 7.800h-7.500l-3.300-4.800l-4.200 4.800h-6l7.500-8z" fill="#080808"/><path d="M605 697.500h8l1.500 2h-8z" fill="#080808"/><path d="M607 698.300h5" stroke="#c8d4e4" stroke-width=".7"/>
<!-- tray -->
<path d="M924.500 695.300l3-3.600l3 3.600z" fill="#f4f6fa"/>
<rect x="939.700" y="685.800" width="13" height="12.400" fill="#f8f5c0" stroke="#e0dc98" stroke-width=".5"/><path d="M942 688.500h8.500l-4.200 7.500z" fill="none" stroke="#303020" stroke-width="1"/><circle cx="946.200" cy="690.800" r="1.300" fill="#303020"/><path d="M943 687.300h6.500" stroke="#303020" stroke-width=".8"/>
<circle cx="965" cy="692.500" r="5.900" fill="#181818" stroke="#101010" stroke-width="1"/><path d="M959.500 692.500h11M965 687v11" stroke="#e8e8e8" stroke-width=".9"/><ellipse cx="965" cy="692.500" rx="2.700" ry="5.200" fill="none" stroke="#e8e8e8" stroke-width=".8"/><path d="M960.800 689.700h8.400M960.800 695.300h8.400" stroke="#e8e8e8" stroke-width=".8"/>
<path d="M979.500 686v12.500" stroke="#f4f4f4" stroke-width="1.400"/><path d="M980.200 686.500h5.500l-1 1.500l3.500 1.300l-3.800 1.500l-.3 1.300h-3.900z" fill="#f8f8f8" stroke="#404850" stroke-width=".6"/>
<rect x="999.500" y="688" width="8.500" height="6.800" fill="#e8eef4" stroke="#282828" stroke-width="1.200"/><path d="M1001.500 697.800h5M1004 695v2.500" stroke="#282828" stroke-width="1.200"/><path d="M997.500 685.500v8M996 687h3.500" stroke="#282828" stroke-width="1"/><rect x="996.300" y="685" width="2.600" height="1.600" fill="#f0f0f0" stroke="#282828" stroke-width=".5"/>
<path d="M1015.500 690.500h2.500l3-3v10l-3-3h-2.500z" fill="#f8f8f8" stroke="#60666e" stroke-width=".5"/><path d="M1023 689.500q1.500 3 0 6M1025 688q2.500 4.500 0 9" stroke="#f4f4f4" stroke-width="1" fill="none"/>
<path d="M1035.500 686h11.500q.3 8-5.700 12.500q-6-4.500-5.800-12.500z" fill="#e81c24" stroke="#f4f4f4" stroke-width=".8"/><path d="M1044 689.300q-2.500-1.500-4.500-.3q-1.800 1.500-1 3.800q1 2 3.300 1.800q1.800-.3 2-2.300h-2.600" fill="none" stroke="#fff" stroke-width="1.400"/>
</svg>
<!-- TeamViewer widget -->
<svg style="left:1104px;top:590px" width="20" height="46" viewBox="1104 590 20 46"><path d="M1107 597.500l3.500-3.700h13.500v39.400l-17-10z" fill="#58585a" stroke="#dcdcdc" stroke-width=".5"/><rect x="1112" y="598.300" width="12" height="15.500" fill="#1f4c8c"/><circle cx="1120" cy="606" r="4.600" fill="#3f78bc"/><path d="M1117 606h6M1117 606l1.600-1.300v2.600zM1123 606l-1.600-1.300v2.600z" stroke="#b8d4f0" stroke-width=".7" fill="#b8d4f0"/></svg>

<!-- ===== dialogs ===== -->
<svg width="0" height="0"><defs>
<linearGradient id="rb" x1="0" y1="0" x2="0" y2="1"><stop offset="0" stop-color="#401010"/><stop offset=".18" stop-color="#e03010"/><stop offset=".36" stop-color="#f0a010"/><stop offset=".5" stop-color="#e8e020"/><stop offset=".64" stop-color="#30b040"/><stop offset=".8" stop-color="#1070a0"/><stop offset=".93" stop-color="#083050"/><stop offset="1" stop-color="#101820"/></linearGradient>
</defs></svg>
<!-- Information dialog -->
<div class="a" style="left:322px;top:158px;width:482px;height:362px;background:#f0f0f0;border:1px solid #d6ecf8;border-radius:4px 4px 1px 1px;z-index:10;overflow:hidden">
 <div class="a" style="left:0;top:0;width:480px;height:18px;background:linear-gradient(#b6cae4,#c2d3e9 60%,#cfdcee)"></div>
 <div class="a" style="left:0;top:18px;width:480px;height:1px;background:#f8fafc"></div>
</div>
<div class="a" style="left:803px;top:162px;width:1px;height:357px;background:#78cef4;z-index:11"></div>
<div class="a" style="left:323px;top:519px;width:481px;height:1px;background:#5bbce8;z-index:11"></div>
<svg style="left:325px;top:160px;z-index:12" width="14" height="14" viewBox="0 0 14 14"><path d="M6.3 0.8 L12.8 13.4 L0.4 13.4 Z" fill="url(#rb)"/></svg>
<!-- close btn -->
<div class="a" style="left:776px;top:161px;width:24px;height:13px;border:1px solid #5a2a2a;border-radius:2px;background:linear-gradient(#eab0a0,#dc6a54 45%,#c9321c 50%,#d85a40 80%,#e89070);z-index:12"></div>
<svg style="left:782px;top:163px;z-index:13" width="12" height="9" viewBox="0 0 12 9"><path d="M3.200 1.600 L8.800 7.200 M8.800 1.600 L3.200 7.200" stroke="#6a3030" stroke-width="3.400" stroke-linecap="butt"/><path d="M3.600 2 L8.400 6.800 M8.400 2 L3.600 6.800" stroke="#fff" stroke-width="2" stroke-linecap="butt"/></svg>
<!-- group boxes -->
<div class="grp" style="left:328px;top:198px;width:233px;height:135px"></div>
<div class="grp" style="left:328px;top:341px;width:233px;height:39px"></div>
<div class="grp" style="left:328px;top:388px;width:233px;height:39px"></div>
<div class="grp" style="left:328px;top:435px;width:233px;height:40px"></div>
<div class="grp" style="left:566px;top:199px;width:233px;height:40px"></div>
<div class="grp" style="left:566px;top:246px;width:233px;height:40px"></div>
<div class="grp" style="left:566px;top:293px;width:233px;height:40px"></div>
<div class="grp" style="left:566px;top:341px;width:233px;height:39px"></div>
<div class="grp" style="left:566px;top:388px;width:233px;height:39px"></div>
<div class="grp" style="left:566px;top:435px;width:233px;height:40px"></div>
<!-- OK button -->
<div class="a" style="left:467px;top:482px;width:181px;height:26px;border:1px solid #3a8ec4;border-radius:3px;background:linear-gradient(#f4f4f4,#ececec 45%,#dcdcdc 50%,#cfcfcf);box-shadow:inset 0 0 0 1px #8fd4f2;z-index:19"></div>
<!-- AAG box -->
<div class="a" style="left:435px;top:296.500px;width:260px;height:124px;background:#f0f0f0;border:1px solid #6a7686;border-radius:4px 4px 1px 1px;z-index:30;overflow:hidden">
 <div class="a" style="left:0;top:0;width:258px;height:18px;background:linear-gradient(#c3d3e7,#d0dcec 50%,#dfe7f2)"></div>
 <div class="a" style="left:0;top:18px;width:258px;height:65px;background:#fff"></div>
</div>
<div class="a" style="left:668px;top:300px;width:23px;height:13px;border:1px solid #8a9bb4;border-radius:2px;background:linear-gradient(#d6e1ef,#bccde3 55%,#c6d5e8);z-index:31"></div>
<svg style="left:674px;top:302px;z-index:32" width="11" height="9" viewBox="0 0 11 9"><path d="M1.200 1.200 L9.600 7.600 M9.600 1.200 L1.200 7.600" stroke="#5a6472" stroke-width="3.400" stroke-linecap="butt"/><path d="M2 1.800 L8.800 7 M8.800 1.800 L2 7" stroke="#f4f6f8" stroke-width="1.800" stroke-linecap="butt"/></svg>
<div class="a" style="left:617px;top:390px;width:69px;height:19px;border:1px solid #3a8ec4;border-radius:3px;background:linear-gradient(#f5f5f5,#ececec 45%,#dddddd 50%,#d0d0d0);box-shadow:inset 0 0 0 1px #8fd4f2;z-index:31"></div>

<span class="t" style="left:18.7px;top:6.0px;font-size:9.5px;letter-spacing:-0.866px;color:#1e2a3a;">PRiSM</span>
<span class="t" style="left:62.0px;top:6.0px;font-size:9.5px;letter-spacing:-0.275px;color:#1e2a3a;">Version  9.0.5 build 2718</span>
<span class="t" style="left:167.3px;top:6.0px;font-size:9.5px;letter-spacing:-0.238px;color:#1e2a3a;">06/11/2014</span>
<span class="t" style="left:219.8px;top:6.0px;font-size:9.5px;letter-spacing:-0.328px;color:#1e2a3a;">{TU : 07/12/2014 17:31:10}</span>
<span class="t" style="left:328.9px;top:6.0px;font-size:9.5px;letter-spacing:-0.304px;color:#1e2a3a;">Alloué &gt; 26 284 112</span>
<span class="t" style="left:411.6px;top:6.0px;font-size:9.5px;letter-spacing:-0.252px;color:#1e2a3a;">-&gt; Log activé , Processus</span>
<span class="t" style="left:515.3px;top:6.0px;font-size:9.5px;letter-spacing:-0.792px;color:#1e2a3a;">0x000018F8</span>
<span class="t" style="left:565.5px;top:6.0px;font-size:9.5px;letter-spacing:-0.656px;color:#1e2a3a;">[19,3]</span>
<span class="t" style="left:3.7px;top:21.9px;font-size:9.7px;letter-spacing:-0.346px;color:#4a5568;">Fichier</span>
<span class="t" style="left:42.0px;top:21.9px;font-size:9.7px;letter-spacing:-0.154px;color:#4a5568;">Edition</span>
<span class="t" style="left:82.0px;top:21.9px;font-size:9.7px;letter-spacing:-0.180px;color:#4a5568;">Prétraitement</span>
<span class="t" style="left:149.5px;top:21.9px;font-size:9.7px;letter-spacing:-0.411px;color:#4a5568;">Analyse</span>
<span class="t" style="left:192.7px;top:21.9px;font-size:9.7px;letter-spacing:-0.669px;color:#4a5568;">Caméras</span>
<span class="t" style="left:239.7px;top:21.9px;font-size:9.7px;letter-spacing:-0.158px;color:#4a5568;">Telescope/observatoire</span>
<span class="t" style="left:347.4px;top:21.9px;font-size:9.7px;letter-spacing:-0.548px;color:#4a5568;">Fenêtre</span>
<span class="t" style="left:388.7px;top:21.9px;font-size:9.7px;letter-spacing:-0.132px;color:#4a5568;">Options</span>
<span class="t" style="left:432.8px;top:21.9px;font-size:9.7px;letter-spacing:-0.397px;color:#4a5568;">Aide</span>
<span class="t" style="left:23.5px;top:69.9px;font-size:9.6px;letter-spacing:-0.602px;color:#1e2a3a;">Le ciel EQ.2000,</span>
<span class="t" style="left:88.0px;top:69.9px;font-size:9.6px;letter-spacing:-0.357px;color:#1e2a3a;">Zoom=8,</span>
<span class="t" style="left:130.2px;top:69.9px;font-size:9.6px;letter-spacing:-0.148px;color:#1e2a3a;">Alpha=</span>
<span class="t" style="left:162.8px;top:69.9px;font-size:9.6px;letter-spacing:-0.593px;color:#1e2a3a;">20h24m33s</span>
<span class="t" style="left:211.4px;top:69.9px;font-size:9.6px;letter-spacing:-0.480px;color:#1e2a3a;">Delta=</span>
<span class="t" style="left:241.5px;top:69.9px;font-size:9.6px;letter-spacing:-0.145px;color:#1e2a3a;">+00°16&#x27;29&#x27;&#x27;</span>
<span class="t" style="left:296.0px;top:69.9px;font-size:9.6px;letter-spacing:-0.452px;color:#1e2a3a;">07/12/2014 17:28:13</span>
<span class="t" style="left:379.4px;top:69.9px;font-size:9.6px;letter-spacing:-2.197px;color:#1e2a3a;">TU</span>
<span class="t" style="left:393.5px;top:69.9px;font-size:9.6px;letter-spacing:-0.081px;color:#1e2a3a;">[Window1.mapsky]</span>
<span class="t" style="left:481.0px;top:69.9px;font-size:9.6px;letter-spacing:-0.329px;color:#1e2a3a;">Orthez Plein Sud [France]</span>
<span class="t" style="left:12.0px;top:631.5px;font-size:10.2px;color:#000;transform:scaleX(0.8232);transform-origin:0 50%;">Zoom=8</span>
<span class="t" style="left:67.0px;top:631.5px;font-size:10.2px;color:#000;transform:scaleX(0.8211);transform-origin:0 50%;">Alpha= 20h18m28.066s Delta= +03°14&#x27;10.49&quot;</span>
<span class="t" style="left:243.8px;top:630.8px;font-size:10.2px;color:#000;transform:scaleX(0.8020);transform-origin:0 50%;">Eq</span>
<span class="t" style="left:277.6px;top:631.5px;font-size:10.2px;color:#000;transform:scaleX(0.8137);transform-origin:0 50%;">Objets: 129</span>
<span class="t" style="left:352.5px;top:631.5px;font-size:10.2px;color:#000;transform:scaleX(0.7805);transform-origin:0 50%;">Aql</span>
<span class="t" style="left:386.0px;top:631.5px;font-size:10.2px;color:#000;transform:scaleX(0.8234);transform-origin:0 50%;">Champ=23°15&#x27;43&quot;x12°45&#x27;08&quot;</span>
<span class="t" style="left:533.0px;top:631.5px;font-size:10.2px;color:#e02020;transform:scaleX(0.8409);transform-origin:0 50%;">Az IZ Tpc</span>
<span class="t" style="left:340.4px;top:163.1px;font-size:9.6px;letter-spacing:0.160px;color:#1e2a3a;z-index:20;">Information</span>
<span class="t" style="left:327.0px;top:182.5px;font-size:10.3px;font-weight:700;color:#000;z-index:20;transform:scaleX(0.9057);transform-origin:0 50%;">La connexion à ce(s) different(s) matériel(s) s&#x27;est bien déroulée, veuillez inspecter votre configuration</span>
<span class="t" style="left:333.5px;top:193.0px;font-size:9.7px;color:#000;z-index:20;transform:scaleX(0.8825);transform-origin:0 50%;background:#f0f0f0;">Telescope</span>
<span class="t" style="left:335.4px;top:210.3px;font-size:10.3px;font-weight:700;color:#000;z-index:20;transform:scaleX(0.9116);transform-origin:0 50%;">Télescope controllé par ASCOM : TheSky</span>
<span class="t" style="left:571.6px;top:193.9px;font-size:9.7px;color:#000;z-index:20;transform:scaleX(0.8491);transform-origin:0 50%;background:#f0f0f0;">Focalisation</span>
<span class="t" style="left:572.8px;top:210.7px;font-size:10.3px;font-weight:700;color:#6e6e6e;z-index:20;transform:scaleX(0.8800);transform-origin:0 50%;">Aucun</span>
<span class="t" style="left:571.6px;top:240.7px;font-size:9.7px;color:#000;z-index:20;transform:scaleX(0.8480);transform-origin:0 50%;background:#f0f0f0;">Roue à filtres</span>
<span class="t" style="left:572.8px;top:257.7px;font-size:10.3px;font-weight:700;color:#6e6e6e;z-index:20;transform:scaleX(0.8800);transform-origin:0 50%;">Aucun</span>
<span class="t" style="left:571.6px;top:287.8px;font-size:9.7px;color:#000;z-index:20;transform:scaleX(0.8640);transform-origin:0 50%;background:#f0f0f0;">Coupole/Abri</span>
<span class="t" style="left:695.6px;top:304.5px;font-size:10.3px;font-weight:700;color:#000;z-index:20;transform:scaleX(0.8887);transform-origin:0 50%;">ME Dome</span>
<span class="t" style="left:333.0px;top:334.8px;font-size:9.7px;color:#000;z-index:20;transform:scaleX(0.8757);transform-origin:0 50%;background:#f0f0f0;">Guidage (raquettage des mo</span>
<span class="t" style="left:334.7px;top:352.1px;font-size:10.3px;font-weight:700;color:#000;z-index:20;transform:scaleX(0.9132);transform-origin:0 50%;">-&gt; par ASCOM (Telescope)</span>
<span class="t" style="left:333.0px;top:382.2px;font-size:9.7px;color:#000;z-index:20;transform:scaleX(0.8641);transform-origin:0 50%;background:#f0f0f0;">Moniteur de nuages</span>
<span class="t" style="left:334.7px;top:398.8px;font-size:10.3px;font-weight:700;color:#000;z-index:20;transform:scaleX(0.8856);transform-origin:0 50%;">BoltWood Cloud sens.</span>
<span class="t" style="left:333.0px;top:429.0px;font-size:9.7px;color:#000;z-index:20;transform:scaleX(0.8457);transform-origin:0 50%;background:#f0f0f0;">Gestion des interrupteurs</span>
<span class="t" style="left:334.7px;top:449.0px;font-size:10.3px;font-weight:700;color:#6e6e6e;z-index:20;transform:scaleX(0.8831);transform-origin:0 50%;">Aucun</span>
<span class="t" style="left:571.6px;top:429.0px;font-size:9.7px;color:#000;z-index:20;transform:scaleX(0.8538);transform-origin:0 50%;background:#f0f0f0;">Focalisation secondaire</span>
<span class="t" style="left:572.8px;top:446.0px;font-size:10.3px;font-weight:700;color:#6e6e6e;z-index:20;transform:scaleX(0.8800);transform-origin:0 50%;">Aucun</span>
<span class="t" style="left:551.5px;top:489.1px;font-size:9.7px;color:#000;z-index:20;transform:scaleX(0.8571);transform-origin:0 50%;">OK</span>
<span class="t" style="left:440.4px;top:301.9px;font-size:9.8px;letter-spacing:-0.351px;color:#4a5a70;z-index:40;">AAG_ClarityEmulator II</span>
<span class="t" style="left:446.9px;top:337.2px;font-size:9.8px;letter-spacing:-0.261px;color:#0c0c0c;z-index:40;">Problem with AAG_WeatherCenter - cannot start.</span>
<span class="t" style="left:446.9px;top:348.9px;font-size:9.8px;letter-spacing:-0.210px;color:#0c0c0c;z-index:40;">L&#x27;objet ne gère pas cette propriété ou cette méthode</span>
<span class="t" style="left:644.5px;top:393.9px;font-size:9.8px;letter-spacing:-1.156px;color:#0c0c0c;z-index:40;">OK</span>
<span class="t" style="left:900.6px;top:686.2px;font-size:9px;letter-spacing:-1.100px;color:#fff;">FR</span>
<span class="t" style="left:1073.0px;top:682.6px;font-size:9px;letter-spacing:-0.258px;color:#fff;">18:31</span>
<span class="t" style="left:1060.6px;top:695.6px;font-size:9px;letter-spacing:0.006px;color:#fff;">07/12/2014</span>
</body></html>
